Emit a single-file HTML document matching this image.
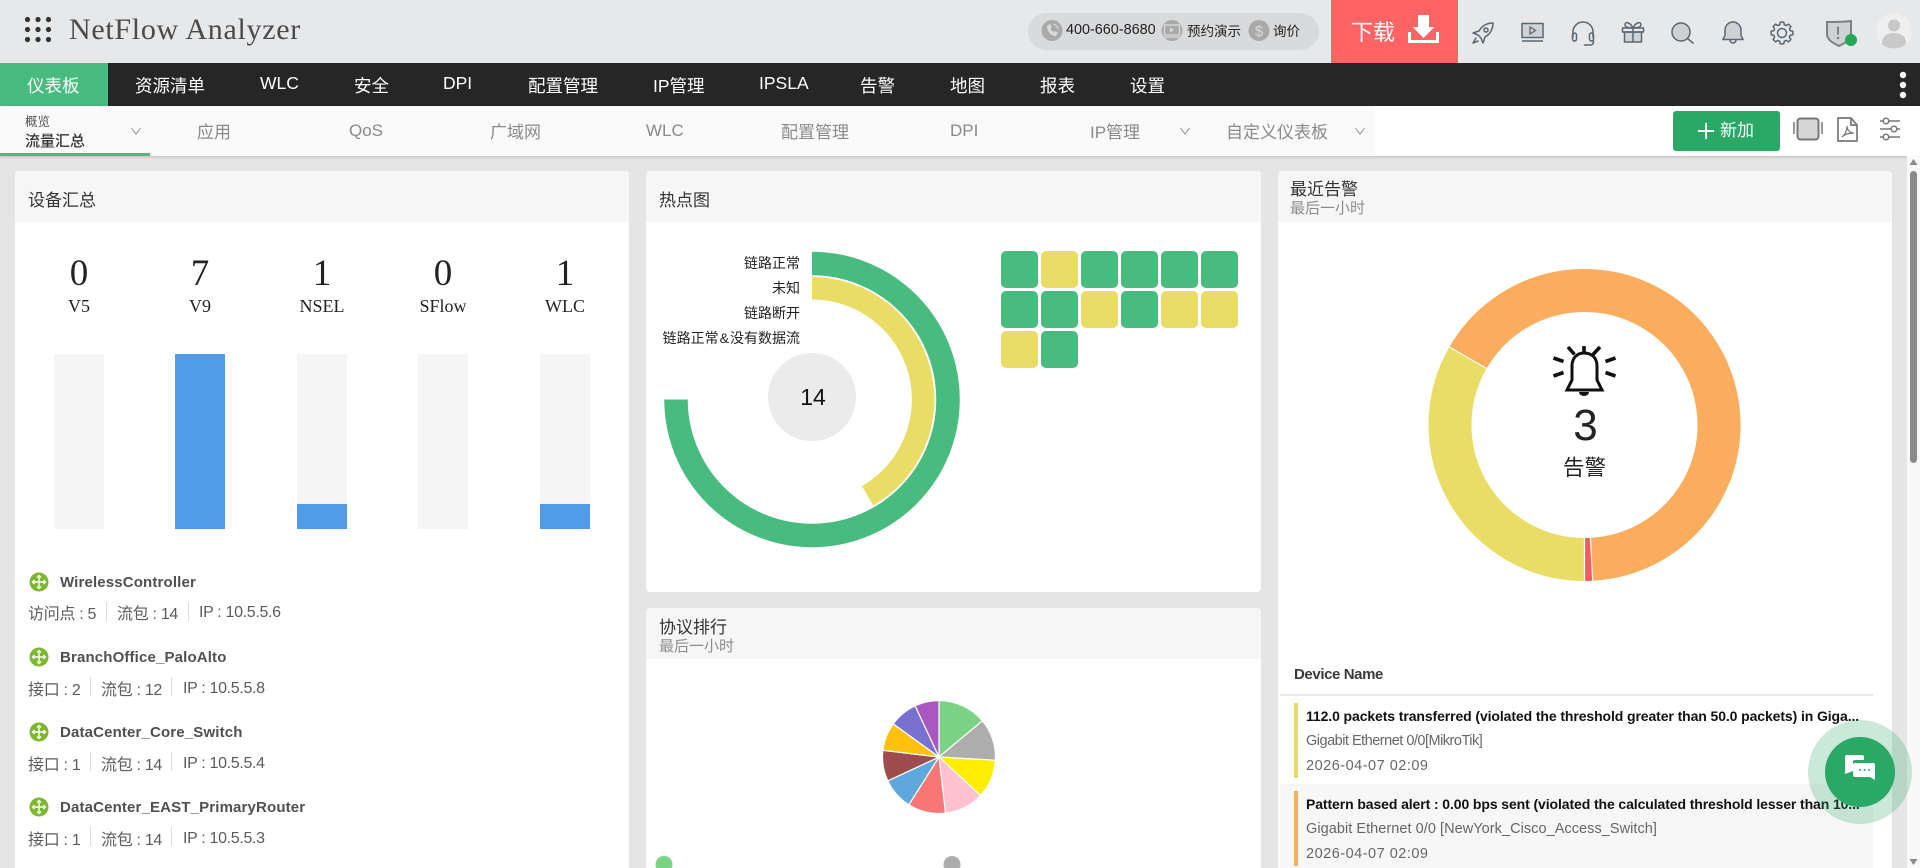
<!DOCTYPE html>
<html lang="zh"><head><meta charset="utf-8"><title>NetFlow Analyzer</title>
<style>
html,body{margin:0;padding:0;width:1920px;height:868px;overflow:hidden;background:#e5e5e5;}
body{position:relative;font-family:"Liberation Sans","Noto Sans CJK SC",sans-serif;color:#333;}
.a{position:absolute;}
.t{position:absolute;white-space:nowrap;line-height:24px;height:24px;}
.nav{color:#fff;font-size:17.5px;}
.sub{color:#8a8a8a;font-size:17px;}
.ttl{font-size:17px;color:#333;}
.st{font-size:15px;color:#8d8d8d;}
.num{font-family:"Liberation Serif",serif;font-size:37px;color:#222;text-align:center;width:100px;}
.lab{font-family:"Liberation Serif",serif;font-size:18px;color:#222;text-align:center;width:100px;}
.bar{position:absolute;top:354px;width:50px;height:175px;background:#f5f5f5;}
.bar i{position:absolute;left:0;right:0;bottom:0;background:#519be9;display:block;}
.cell{position:absolute;width:37px;height:37px;border-radius:5px;}
.g{background:#48bb7f;}.y{background:#e9dd66;}
.dn{font-size:15px;font-weight:bold;color:#505050;letter-spacing:.15px;}
.dm{font-size:16px;color:#5c5c5c;letter-spacing:-.3px;}
.ip{font-size:16px;color:#5c5c5c;letter-spacing:-.33px;}
.sep{position:absolute;width:1px;height:19px;background:#ddd;}
.lg{font-size:14px;color:#222;text-align:right;width:200px;}
.at{font-size:14px;font-weight:bold;color:#111;letter-spacing:-.1px;}
.as{font-size:14.5px;color:#666;}
</style></head><body>

<!-- top bar -->
<div class="a" style="left:0;top:0;width:1920px;height:63px;background:#e7e8e9;"></div>
<svg class="a" style="left:0;top:0" width="60" height="63"><g fill="#333"><circle cx="27.5" cy="19.5" r="2.6"/><circle cx="38" cy="19.5" r="2.6"/><circle cx="48.5" cy="19.5" r="2.6"/><circle cx="27.5" cy="29.5" r="2.6"/><circle cx="38" cy="29.5" r="2.6"/><circle cx="48.5" cy="29.5" r="2.6"/><circle cx="27.5" cy="39.5" r="2.6"/><circle cx="38" cy="39.5" r="2.6"/><circle cx="48.5" cy="39.5" r="2.6"/></g></svg>
<div class="t" style="left:69px;top:18px;font-family:'Liberation Serif',serif;font-size:30px;line-height:24px;color:#4a4a4a;letter-spacing:.7px;">NetFlow Analyzer</div>

<div class="a" style="left:1028px;top:13px;width:291px;height:37px;border-radius:19px;background:#d9dadb;"></div>
<div class="t" style="left:1066px;top:18px;font-size:14.4px;color:#222;">400-660-8680</div>
<div class="t" style="left:1187px;top:20px;font-size:13.5px;color:#222;">预约演示</div>
<div class="t" style="left:1273px;top:20px;font-size:13.5px;color:#222;">询价</div>
<div class="a" style="left:1331px;top:0;width:127px;height:63px;background:#ff6363;"></div>
<div class="t" style="left:1351px;top:21px;font-size:22px;color:#fff;">下载</div>

<svg class="a" style="left:1030px;top:0" width="890" height="63" viewBox="1030 0 890 63">
 <!-- pill icons -->
 <circle cx="1052" cy="30.5" r="10.5" fill="#a9a9a9"/>
 <path d="M1047 26c0 6 4 10 9 10l2-3-3-2-1.5 1c-1.5-1-2.5-2-3-3.500l1.500-1.500-2-3z" fill="#d9dadb"/>
 <path d="M1053 24a6 6 0 0 1 5 5" fill="none" stroke="#d9dadb" stroke-width="1.2"/>
 <circle cx="1172" cy="30.5" r="10.5" fill="#a9a9a9"/>
 <rect x="1164.5" y="25" width="15" height="10" fill="none" stroke="#d9dadb" stroke-width="1.3"/>
 <path d="M1164 37h16" stroke="#d9dadb" stroke-width="1.3"/><path d="M1170 27.500v5l4-2.500z" fill="#d9dadb"/>
 <circle cx="1259" cy="30.5" r="10.5" fill="#a9a9a9"/>
 <text x="1259" y="36" text-anchor="middle" font-family="Liberation Sans" font-size="15" fill="#d9dadb">$</text>
 <!-- download -->
 <path d="M1418 15h11v12h5.500l-11 11-11-11h5.500z" fill="#fff"/>
 <path d="M1409.5 32v9.500h28V32" fill="none" stroke="#fff" stroke-width="3"/>
 <!-- rocket -->
 <g fill="none" stroke="#5a6670" stroke-width="1.5" stroke-linejoin="round" stroke-linecap="round">
 <path d="M1493 23c-6 0-11 3-14 8l-6 2 5 2 3 3 2 5 2-6c5-3 8-8 8-14z"/>
 <path d="M1476 38l-3 5 5-2"/><circle cx="1486" cy="30" r="2"/></g>
 <!-- screen -->
 <rect x="1522" y="23.5" width="21" height="14" fill="#cfd3d6" stroke="#5a6670" stroke-width="1.5"/>
 <path d="M1522 41h21" stroke="#5a6670" stroke-width="1.5"/><path d="M1530 27v7l5.500-3.500z" fill="none" stroke="#5a6670" stroke-width="1.3"/>
 <!-- headset -->
 <g fill="none" stroke="#5a6670" stroke-width="1.5" stroke-linecap="round">
 <path d="M1573 37v-5a10 10 0 0 1 20 0v5"/><rect x="1572.5" y="33" width="4" height="8" rx="2"/><rect x="1589.5" y="33" width="4" height="8" rx="2"/><path d="M1593.500 41v1a3 3 0 0 1-3 3h-6"/></g>
 <!-- gift -->
 <g fill="none" stroke="#5a6670" stroke-width="1.5" stroke-linejoin="round">
 <rect x="1624.5" y="32" width="17" height="10" fill="#cfd3d6"/><rect x="1622.5" y="28" width="21" height="4"/><path d="M1633 28v14"/>
 <path d="M1633 28c-3-6-8-7-8-3 0 2 4 3 8 3c3-6 8-7 8-3 0 2-4 3-8 3z"/></g>
 <!-- search -->
 <circle cx="1681" cy="32" r="9" fill="#cdd1d4" stroke="#5a6670" stroke-width="1.5"/><path d="M1687.5 38.500l6 5" stroke="#5a6670" stroke-width="1.5"/>
 <!-- bell -->
 <path d="M1733 22a8 8 0 0 0-8 8v5c0 2-2 3-2 4.500h20c0-1.500-2-2.500-2-4.500v-5a8 8 0 0 0-8-8z" fill="#cdd1d4" stroke="#5a6670" stroke-width="1.5"/>
 <path d="M1730 40a3 3 0 0 0 6 0" fill="none" stroke="#5a6670" stroke-width="1.5"/>
 <!-- gear -->
 <g transform="translate(1782 33)" fill="none" stroke="#5a6670" stroke-width="1.5" stroke-linejoin="round">
 <polygon points="-2.34,-8.17 -1.72,-10.86 1.72,-10.86 2.34,-8.17 4.12,-7.43 6.47,-8.9 8.9,-6.47 7.43,-4.12 8.17,-2.34 10.86,-1.72 10.86,1.72 8.17,2.34 7.43,4.12 8.9,6.47 6.47,8.9 4.12,7.43 2.34,8.17 1.72,10.86 -1.72,10.86 -2.34,8.17 -4.12,7.43 -6.47,8.9 -8.9,6.47 -7.43,4.12 -8.17,2.34 -10.86,1.72 -10.86,-1.72 -8.17,-2.34 -7.43,-4.12 -8.9,-6.47 -6.47,-8.9 -4.12,-7.43"/>
 <circle r="4.5"/></g>
 <!-- shield -->
 <path d="M1827 22c8 0 16 0 24-1v13c0 6-6 9-12 12c-6-3-12-6-12-12z" fill="#d0d3d5" stroke="#7e8183" stroke-width="2"/>
 <path d="M1838 26.500v8" stroke="#7e8183" stroke-width="2"/><circle cx="1838" cy="38" r="1.3" fill="#7e8183"/>
 <circle cx="1851" cy="40" r="6" fill="#26a65b"/>
 <!-- avatar -->
 <circle cx="1894" cy="31" r="18" fill="#efefef"/><circle cx="1894" cy="25.5" r="6" fill="#c9c9c9"/>
 <path d="M1882 44c0-8 5-11 12-11s12 3 12 11c-3 3-7 4.500-12 4.500s-9-1.500-12-4.500z" fill="#c9c9c9"/>
</svg>

<!-- nav -->
<div class="a" style="left:0;top:63px;width:1920px;height:43px;background:#262626;"></div>
<div class="a" style="left:0;top:63px;width:108px;height:43px;background:#48bb7f;"></div>
<div class="t nav" style="left:27px;top:74px;">仪表板</div>
<div class="t nav" style="left:135px;top:74px;">资源清单</div>
<div class="t nav" style="left:260px;top:71px;">WLC</div>
<div class="t nav" style="left:354px;top:74px;">安全</div>
<div class="t nav" style="left:443px;top:71px;">DPI</div>
<div class="t nav" style="left:528px;top:74px;">配置管理</div>
<div class="t nav" style="left:653px;top:74px;">IP管理</div>
<div class="t nav" style="left:759px;top:71px;">IPSLA</div>
<div class="t nav" style="left:860px;top:74px;">告警</div>
<div class="t nav" style="left:950px;top:74px;">地图</div>
<div class="t nav" style="left:1040px;top:74px;">报表</div>
<div class="t nav" style="left:1130px;top:74px;">设置</div>
<svg class="a" style="left:1895px;top:70px" width="20" height="30"><g fill="#fff"><circle cx="8" cy="5" r="3.2"/><circle cx="8" cy="15" r="3.2"/><circle cx="8" cy="25" r="3.2"/></g></svg>

<!-- subnav -->
<div class="a" style="left:0;top:106px;width:1920px;height:50px;background:#fff;box-shadow:0 1px 3px rgba(0,0,0,.18);"></div>
<div class="a" style="left:0;top:106px;width:1375px;height:50px;background:#fafafa;"></div>
<div class="a" style="left:0;top:153px;width:150px;height:3px;background:#48bb7f;"></div>
<div class="t" style="left:25px;top:110px;font-size:12.5px;color:#555;">概览</div>
<div class="t" style="left:25px;top:130px;font-size:15px;color:#333;font-weight:500;">流量汇总</div>
<div class="t sub" style="left:197px;top:121px;">应用</div>
<div class="t sub" style="left:349px;top:119px;">QoS</div>
<div class="t sub" style="left:490px;top:121px;">广域网</div>
<div class="t sub" style="left:646px;top:119px;">WLC</div>
<div class="t sub" style="left:781px;top:121px;">配置管理</div>
<div class="t sub" style="left:950px;top:119px;">DPI</div>
<div class="t sub" style="left:1090px;top:121px;">IP管理</div>
<div class="t sub" style="left:1226px;top:121px;">自定义仪表板</div>
<svg class="a" style="left:0;top:106px" width="1375" height="50" fill="none" stroke="#8e8e8e" stroke-width="1"><path d="M131.5 22l4.500 6 4.500-6"/><path d="M1180.5 22l4.500 6 4.500-6"/><path d="M1355.5 22l4.500 6 4.500-6"/></svg>

<div class="a" style="left:1673px;top:111px;width:107px;height:40px;border-radius:3px;background:#2aa866;"></div>
<div class="t" style="left:1720px;top:119px;font-size:17px;color:#fff;">新加</div>
<svg class="a" style="left:1690px;top:110px" width="230" height="44" viewBox="1690 110 230 44">
 <path d="M1698 131h16M1706 123v16" stroke="#fff" stroke-width="2"/>
 <rect x="1797.5" y="118.5" width="21" height="21" rx="3" fill="#d6d6d6" stroke="#777" stroke-width="2"/>
 <path d="M1794 122v12M1822 122v12" stroke="#777" stroke-width="1.5"/>
 <path d="M1838 118h13l6 7v16h-19z M1851 118v7h6" fill="none" stroke="#777" stroke-width="1.7"/>
 <path d="M1842 137c3-2 5-7 5-11c0 4 3 7 7 7c-4 0-9 1-12 4z" fill="none" stroke="#777" stroke-width="1.2"/>
 <g stroke="#777" stroke-width="1.5" fill="#fff"><path d="M1880 121h20M1880 129h20M1880 137h20"/><circle cx="1886" cy="121" r="2.8"/><circle cx="1894" cy="129" r="2.8"/><circle cx="1886" cy="137" r="2.8"/></g>
</svg>

<!-- left panel -->
<div class="a" style="left:15px;top:171px;width:614px;height:720px;background:#fff;border-radius:4px 4px 0 0;"></div>
<div class="a" style="left:15px;top:171px;width:614px;height:51px;background:#f6f6f6;border-radius:4px 4px 0 0;"></div>
<div class="t ttl" style="left:28px;top:189px;">设备汇总</div>
<div class="t num" style="left:29px;top:262px;">0</div><div class="t num" style="left:150px;top:262px;">7</div><div class="t num" style="left:272px;top:262px;">1</div><div class="t num" style="left:393px;top:262px;">0</div><div class="t num" style="left:515px;top:262px;">1</div>
<div class="t lab" style="left:29px;top:294px;">V5</div><div class="t lab" style="left:150px;top:294px;">V9</div><div class="t lab" style="left:272px;top:294px;">NSEL</div><div class="t lab" style="left:393px;top:294px;">SFlow</div><div class="t lab" style="left:515px;top:294px;">WLC</div>
<div class="bar" style="left:54px"></div>
<div class="bar" style="left:175px"><i style="height:175px"></i></div>
<div class="bar" style="left:297px"><i style="height:25px"></i></div>
<div class="bar" style="left:418px"></div>
<div class="bar" style="left:540px"><i style="height:25px"></i></div>

<svg class="a" style="left:25px;top:570px" width="30" height="250" viewBox="0 0 30 250">
 <g><circle cx="14" cy="12" r="9.5" fill="#7cb82f"/><path d="M14 5.500v13M7.500 12h13M12 7.500l2-2 2 2M12 16.500l2 2 2-2M9.500 10l-2 2 2 2M18.500 10l2 2-2 2" stroke="#fff" stroke-width="1.4" fill="none"/></g>
 <g transform="translate(0,75)"><circle cx="14" cy="12" r="9.5" fill="#7cb82f"/><path d="M14 5.500v13M7.500 12h13M12 7.500l2-2 2 2M12 16.500l2 2 2-2M9.500 10l-2 2 2 2M18.500 10l2 2-2 2" stroke="#fff" stroke-width="1.4" fill="none"/></g>
 <g transform="translate(0,150)"><circle cx="14" cy="12" r="9.5" fill="#7cb82f"/><path d="M14 5.500v13M7.500 12h13M12 7.500l2-2 2 2M12 16.500l2 2 2-2M9.500 10l-2 2 2 2M18.500 10l2 2-2 2" stroke="#fff" stroke-width="1.4" fill="none"/></g>
 <g transform="translate(0,225)"><circle cx="14" cy="12" r="9.5" fill="#7cb82f"/><path d="M14 5.500v13M7.500 12h13M12 7.500l2-2 2 2M12 16.500l2 2 2-2M9.500 10l-2 2 2 2M18.500 10l2 2-2 2" stroke="#fff" stroke-width="1.4" fill="none"/></g>
</svg>
<div class="t dn" style="left:60px;top:571px;">WirelessController</div>
<div class="t dm" style="left:28px;top:603px;">访问点 : 5</div><div class="sep" style="left:106px;top:602px"></div>
<div class="t dm" style="left:117px;top:603px;">流包 : 14</div><div class="sep" style="left:188px;top:602px"></div>
<div class="t ip" style="left:199px;top:601px;">IP : 10.5.5.6</div>
<div class="t dn" style="left:60px;top:646px;">BranchOffice_PaloAlto</div>
<div class="t dm" style="left:28px;top:679px;">接口 : 2</div><div class="sep" style="left:90px;top:677px"></div>
<div class="t dm" style="left:101px;top:679px;">流包 : 12</div><div class="sep" style="left:171px;top:677px"></div>
<div class="t ip" style="left:183px;top:677px;">IP : 10.5.5.8</div>
<div class="t dn" style="left:60px;top:721px;">DataCenter_Core_Switch</div>
<div class="t dm" style="left:28px;top:754px;">接口 : 1</div><div class="sep" style="left:90px;top:752px"></div>
<div class="t dm" style="left:101px;top:754px;">流包 : 14</div><div class="sep" style="left:171px;top:752px"></div>
<div class="t ip" style="left:183px;top:752px;">IP : 10.5.5.4</div>
<div class="t dn" style="left:60px;top:796px;">DataCenter_EAST_PrimaryRouter</div>
<div class="t dm" style="left:28px;top:829px;">接口 : 1</div><div class="sep" style="left:90px;top:827px"></div>
<div class="t dm" style="left:101px;top:829px;">流包 : 14</div><div class="sep" style="left:171px;top:827px"></div>
<div class="t ip" style="left:183px;top:827px;">IP : 10.5.5.3</div>

<!-- heat panel -->
<div class="a" style="left:646px;top:171px;width:615px;height:421px;background:#fff;border-radius:4px;"></div>
<div class="a" style="left:646px;top:171px;width:615px;height:51px;background:#f6f6f6;border-radius:4px 4px 0 0;"></div>
<div class="t ttl" style="left:659px;top:189px;">热点图</div>
<svg class="a" style="left:646px;top:222px" width="400" height="370" viewBox="646 222 400 370">
 <path d="M812 263.5A136 136 0 1 1 676 399.5" fill="none" stroke="#48bb7f" stroke-width="23.5"/>
 <path d="M812 288.25A111.25 111.25 0 0 1 867.6 495.8" fill="none" stroke="#e9dd66" stroke-width="22.5"/>
 <circle cx="812" cy="397" r="44" fill="#ebebeb"/>
 <text x="813" y="405" text-anchor="middle" font-family="Liberation Sans" font-size="23" fill="#111">14</text>
</svg>
<div class="t lg" style="left:600px;top:251px;">链路正常</div>
<div class="t lg" style="left:600px;top:276px;">未知</div>
<div class="t lg" style="left:600px;top:301px;">链路断开</div>
<div class="t lg" style="left:600px;top:326px;">链路正常<span style="margin:0 1px">&amp;</span>没有数据流</div>
<div class="cell g" style="left:1001px;top:251px"></div><div class="cell y" style="left:1041px;top:251px"></div><div class="cell g" style="left:1081px;top:251px"></div><div class="cell g" style="left:1121px;top:251px"></div><div class="cell g" style="left:1161px;top:251px"></div><div class="cell g" style="left:1201px;top:251px"></div>
<div class="cell g" style="left:1001px;top:291px"></div><div class="cell g" style="left:1041px;top:291px"></div><div class="cell y" style="left:1081px;top:291px"></div><div class="cell g" style="left:1121px;top:291px"></div><div class="cell y" style="left:1161px;top:291px"></div><div class="cell y" style="left:1201px;top:291px"></div>
<div class="cell y" style="left:1001px;top:331px"></div><div class="cell g" style="left:1041px;top:331px"></div>

<!-- protocol panel -->
<div class="a" style="left:646px;top:608px;width:615px;height:280px;background:#fff;border-radius:4px 4px 0 0;"></div>
<div class="a" style="left:646px;top:608px;width:615px;height:51px;background:#f6f6f6;border-radius:4px 4px 0 0;"></div>
<div class="t ttl" style="left:659px;top:616px;">协议排行</div>
<div class="t st" style="left:659px;top:635px;">最后一小时</div>
<svg class="a" style="left:646px;top:660px" width="615" height="208" viewBox="646 660 615 208">
 <g stroke="#fff" stroke-width="1.2">
 <path fill="#7ad385" d="M939 757L939 700.5A56.5 56.5 0 0 1 982.4 720.8Z"/>
 <path fill="#adadad" d="M939 757L982.4 720.8A56.5 56.5 0 0 1 995.4 760.3Z"/>
 <path fill="#ffee00" d="M939 757L995.4 760.3A56.5 56.5 0 0 1 980.4 795.5Z"/>
 <path fill="#ffc0cf" d="M939 757L980.4 795.5A56.5 56.5 0 0 1 945.5 813.1Z"/>
 <path fill="#f87675" d="M939 757L945.5 813.1A56.5 56.5 0 0 1 908.8 804.8Z"/>
 <path fill="#5ea8de" d="M939 757L908.8 804.8A56.5 56.5 0 0 1 887.8 780.9Z"/>
 <path fill="#9e4c4c" d="M939 757L887.8 780.9A56.5 56.5 0 0 1 882.9 750.3Z"/>
 <path fill="#ffc00f" d="M939 757L882.9 750.3A56.5 56.5 0 0 1 893.2 723.9Z"/>
 <path fill="#7871cf" d="M939 757L893.2 723.9A56.5 56.5 0 0 1 915.1 705.8Z"/>
 <path fill="#a958c0" d="M939 757L915.1 705.8A56.5 56.5 0 0 1 939 700.5Z"/>
 </g>
 <circle cx="664" cy="864.5" r="8.5" fill="#7ad385"/><circle cx="952" cy="864.5" r="8.5" fill="#adadad"/>
</svg>

<!-- alarm panel -->
<div class="a" style="left:1278px;top:171px;width:614px;height:720px;background:#fff;border-radius:4px 4px 0 0;"></div>
<div class="a" style="left:1278px;top:171px;width:614px;height:51px;background:#f6f6f6;border-radius:4px 4px 0 0;"></div>
<div class="t ttl" style="left:1290px;top:178px;">最近告警</div>
<div class="t st" style="left:1290px;top:197px;">最后一小时</div>
<svg class="a" style="left:1400px;top:240px" width="370" height="360" viewBox="1400 240 370 360">
 <path d="M1468 357.75A134.5 134.5 0 1 1 1591.5 559.3" fill="none" stroke="#fbad5e" stroke-width="43"/>
 <path d="M1584.5 559.5A134.5 134.5 0 0 1 1468 357.75" fill="none" stroke="#e9dd66" stroke-width="43"/>
 <path d="M1591.5 559.3A134.5 134.5 0 0 1 1584.5 559.5" fill="none" stroke="#f25c5c" stroke-width="43"/>
 <g stroke="#fff" stroke-width="1.2"><path d="M1486.6 368.5L1449.4 347M1590.4 537.8L1592.7 580.8M1584.5 538V581"/></g>
 <g fill="none" stroke="#111" stroke-width="3.6">
  <path d="M1568 347l6.500 7.500M1600 347l-7 7.500M1553.500 358l10 3.500M1615.500 358l-10 3.500M1553.500 376l10-3.500M1615.500 376l-10-3.500"/>
  <path d="M1584 346v7"/>
  <path d="M1584 353c-7 0-12 5-12 13v14l-5 10h35l-5-10v-14c0-8-5-13-13-13z" stroke-width="3"/>
 </g>
 <path d="M1579 392h10a5 4 0 0 1-10 0z" fill="#111"/>
 <text x="1585.5" y="440" text-anchor="middle" font-family="Liberation Sans" font-size="44" fill="#222">3</text>
</svg>
<div class="t" style="left:1563px;top:456px;font-size:21.5px;color:#222;">告警</div>

<div class="t" style="left:1294px;top:663px;font-size:15px;font-weight:bold;color:#3a3a3a;letter-spacing:-.4px;">Device Name</div>
<div class="a" style="left:1280px;top:694px;width:593px;height:2px;background:#e8e8e8;"></div>
<div class="a" style="left:1294px;top:703px;width:4px;height:75px;background:#e9dd66;"></div>
<div class="t at" style="left:1306px;top:704px;">112.0 packets transferred (violated the threshold greater than 50.0 packets) in Giga...</div>
<div class="t as" style="left:1306px;top:729px;letter-spacing:-.5px;">Gigabit Ethernet 0/0[MikroTik]</div>
<div class="t as" style="left:1306px;top:754px;letter-spacing:.5px;">2026-04-07 02:09</div>
<div class="a" style="left:1280px;top:784px;width:593px;height:84px;background:#f7f7f7;"></div>
<div class="a" style="left:1294px;top:791px;width:4px;height:75px;background:#fbad5e;"></div>
<div class="t at" style="left:1306px;top:792px;">Pattern based alert : 0.00 bps sent (violated the calculated threshold lesser than 10...</div>
<div class="t as" style="left:1306px;top:817px;letter-spacing:.05px;">Gigabit Ethernet 0/0 [NewYork_Cisco_Access_Switch]</div>
<div class="t as" style="left:1306px;top:842px;letter-spacing:.5px;">2026-04-07 02:09</div>

<!-- scrollbar -->
<div class="a" style="left:1907px;top:156px;width:13px;height:712px;background:#f9f9f9;"></div>
<div class="a" style="left:1910px;top:171px;width:7px;height:292px;background:#8a8a8a;border-radius:4px;"></div>
<svg class="a" style="left:1907px;top:156px" width="13" height="712"><path d="M6.5 3l4 6h-8z" fill="#8a8a8a"/><path d="M6.5 709l4-6h-8z" fill="#8a8a8a"/></svg>

<!-- chat -->
<svg class="a" style="left:1800px;top:712px" width="120" height="120" viewBox="1800 712 120 120">
 <circle cx="1860" cy="772" r="52" fill="rgba(42,168,102,.25)"/>
 <circle cx="1860" cy="772" r="35" fill="#2aa866"/>
 <path d="M1847 755h15a2 2 0 0 1 2 2v3h-9a2 2 0 0 0-2 2v9l-8 3v-17a2 2 0 0 1 2-2z" fill="#fff"/>
 <path d="M1855 763h18a2 2 0 0 1 2 2v15l-5-3h-15a2 2 0 0 1-2-2v-10a2 2 0 0 1 2-2z" fill="#fff"/>
 <g fill="#2aa866"><circle cx="1860" cy="770" r="1"/><circle cx="1864.5" cy="770" r="1"/><circle cx="1869" cy="770" r="1"/></g>
</svg>
</body></html>
